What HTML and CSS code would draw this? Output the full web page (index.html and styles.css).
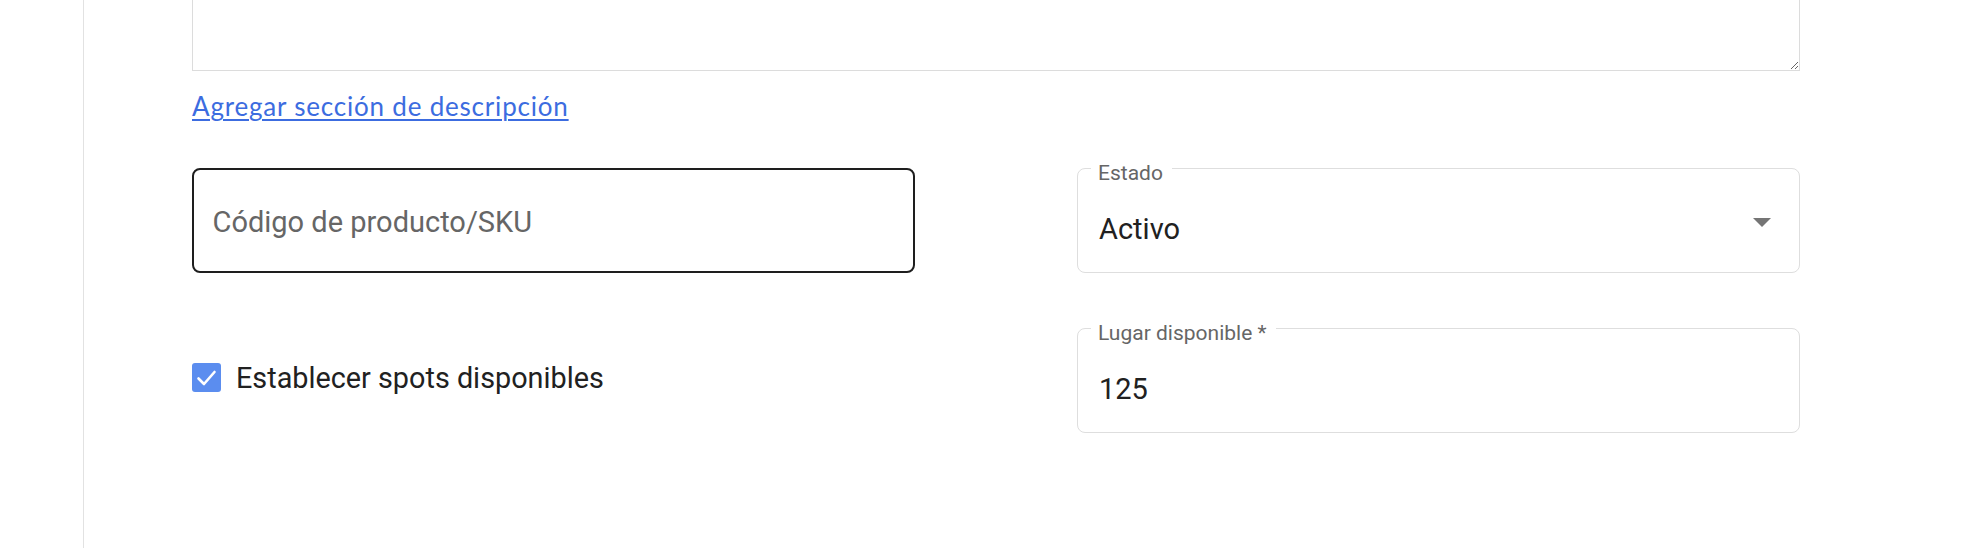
FILE: index.html
```html
<!DOCTYPE html>
<html lang="es">
<head>
<meta charset="utf-8">
<title>Producto</title>
<link rel="stylesheet" href="styles.css">
</head>
<body>
<div class="page">
  <aside class="sidebar"></aside>
  <main class="main">
    <textarea class="description"></textarea>
    <a class="add-link" href="#">Agregar sección de descripción</a>
    <div class="grid">
      <div class="field sku">
        <span class="placeholder">Código de producto/SKU</span>
      </div>
      <div class="field outlined">
        <span class="label">Estado</span>
        <span class="value">Activo</span>
        <svg class="arrow" width="18" height="9" viewBox="0 0 18 9"><path d="M0 0h18L9 9z" fill="#757575"/></svg>
      </div>
      <div class="check-cell">
        <span class="checkbox">
          <svg width="29" height="29" viewBox="0 0 29 29"><path d="M6.5 15.5l5.5 5.5 10.5-12" fill="none" stroke="#fff" stroke-width="2.6" stroke-linecap="round" stroke-linejoin="round"/></svg>
        </span>
        <span class="check-text">Establecer spots disponibles</span>
      </div>
      <div class="field outlined">
        <span class="label">Lugar disponible *</span>
        <span class="value">125</span>
      </div>
    </div>
  </main>
</div>
</body>
</html>
```
FILE: styles.css
```css
html, body {
  margin: 0;
  padding: 0;
  background: #ffffff;
}
body {
  font-family: Roboto, "Liberation Sans", sans-serif;
  color: #212121;
  overflow: hidden;
}
.page {
  display: flex;
  height: 548px;
}
.sidebar {
  width: 83px;
  flex: 0 0 83px;
  border-right: 1px solid #e2e2e2;
}
.main {
  width: 1608px;
  margin-left: 108px;
  display: flex;
  flex-direction: column;
  align-items: flex-start;
}
.description {
  display: block;
  box-sizing: border-box;
  width: 1608px;
  height: 111px;
  margin: -40px 0 0 0;
  border: 1px solid #dcdcdc;
  background: #fff;
  outline: none;
  resize: both;
}
.add-link {
  margin-top: 20px;
  font-family: Lato, "Open Sans", sans-serif;
  font-size: 26px;
  line-height: 30px;
  letter-spacing: 0.8px;
  color: #3c6ce0;
  text-decoration: underline;
  text-underline-offset: 3px;
  text-decoration-thickness: 2px;
}
.grid {
  margin-top: 47px;
  display: grid;
  grid-template-columns: 723px 723px;
  grid-auto-rows: 105px;
  column-gap: 162px;
  row-gap: 55px;
}
.field {
  position: relative;
  box-sizing: border-box;
  height: 105px;
  display: flex;
  align-items: center;
}
.sku {
  border: 2.5px solid #1e1e1e;
  border-radius: 8px;
  padding: 3px 0 0 18.5px;
}
.placeholder {
  font-size: 29px;
  line-height: 34px;
  color: #666666;
}
.outlined {
  border: 1px solid #dedede;
  border-radius: 8px;
  padding: 16px 0 0 21px;
}
.label {
  position: absolute;
  top: -8px;
  left: 13px;
  padding: 0 9px 0 7px;
  background: #fff;
  font-size: 21px;
  line-height: 24px;
  color: #666666;
}
.value {
  font-size: 29px;
  line-height: 34px;
  color: #212121;
}
.arrow {
  position: absolute;
  right: 28px;
  top: 49px;
}
.check-cell {
  display: flex;
  align-items: center;
  padding-bottom: 6px;
  box-sizing: border-box;
  height: 105px;
}
.checkbox {
  width: 29px;
  height: 29px;
  border-radius: 3px;
  background: #5b8def;
  display: flex;
}
.check-text {
  margin-left: 15px;
  font-size: 28.8px;
  line-height: 34px;
  color: #212121;
}
```
